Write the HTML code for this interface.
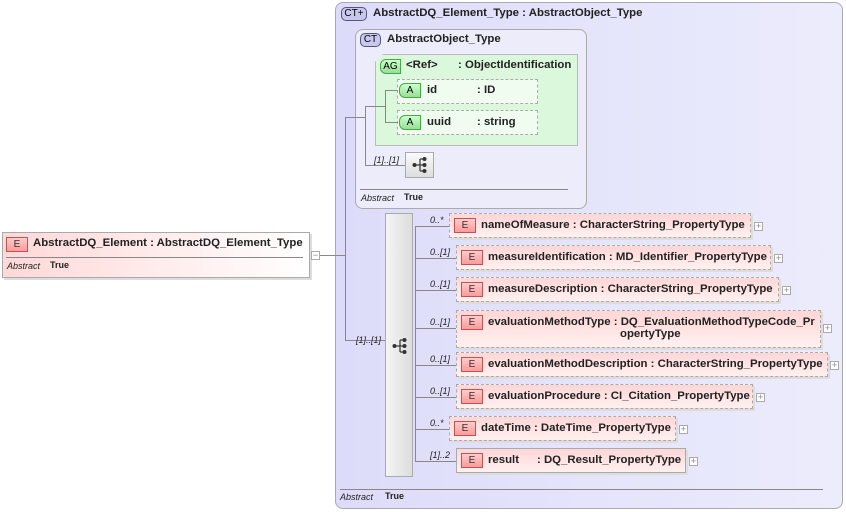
<!DOCTYPE html>
<html><head><style>
body{margin:0;width:846px;height:512px;background:#fff;position:relative;font-family:"Liberation Sans",sans-serif;overflow:hidden}
div,span{position:absolute;box-sizing:border-box}
.b{font-weight:bold;font-size:11.4px;color:#222;white-space:nowrap}
.i{font-style:italic;font-size:9px;color:#222;white-space:nowrap}
.el{border:1px dashed #aaa;background:linear-gradient(180deg,#ffd6d6,#fff0f0);box-shadow:2px 2px 0 #ddd}
.E{width:22px;height:15px;border:1px solid #b55;background:linear-gradient(#fcc,#f99);font-size:10px;text-align:center;line-height:13px;color:#333}
.pl{width:9px;height:9px;border:1px solid #aaa;background:#fff;font-size:9px;line-height:7px;text-align:center;color:#888}
.ln{background:#888}
.A{height:15px;border:1px solid #4a4;background:linear-gradient(#cfc,#9d9);font-size:10px;text-align:center;line-height:13px;border-radius:6px 0 0 6px}
</style></head><body>
<svg width="0" height="0" style="position:absolute"><defs><g id="seq" fill="#333" stroke="#333" stroke-width="1.2"><circle cx="2.5" cy="8" r="2" stroke="none"/><line x1="2.5" y1="8" x2="8" y2="8"/><line x1="8" y1="2" x2="8" y2="14"/><line x1="8" y1="2" x2="12" y2="2"/><line x1="8" y1="8" x2="12" y2="8"/><line x1="8" y1="14" x2="12" y2="14"/><circle cx="12.5" cy="2" r="2" stroke="none"/><circle cx="12.5" cy="8" r="2" stroke="none"/><circle cx="12.5" cy="14" r="2" stroke="none"/></g></defs></svg>
<!-- outer CT -->
<div style="left:335px;top:2px;width:508px;height:507px;border:1px solid #aaa;border-radius:8px;background:linear-gradient(90deg,#dcdcfa,#ececfc)"></div>
<div style="left:341px;top:7px;width:26px;height:14px;border:1px solid #557;border-radius:5px;background:#c8c8ee;font-size:10px;line-height:12px;text-align:center">CT+</div>
<div class="b" style="left:373px;top:7px">AbstractDQ_Element_Type : AbstractObject_Type</div>
<div class="ln" style="left:340px;top:489px;width:483px;height:1px"></div>
<div class="i" style="left:340px;top:492px">Abstract</div><div class="b" style="left:385px;top:491px;font-size:9px">True</div>
<!-- inner CT -->
<div style="left:355px;top:29px;width:232px;height:180px;border:1px solid #aaa;border-radius:8px;background:#ececfb"></div>
<div style="left:360px;top:33px;width:21px;height:14px;border:1px solid #557;border-radius:5px;background:#c8c8ee;font-size:10px;line-height:12px;text-align:center">CT</div>
<div class="b" style="left:387px;top:33px">AbstractObject_Type</div>
<div class="ln" style="left:360px;top:189px;width:208px;height:1px"></div>
<div class="i" style="left:361px;top:193px">Abstract</div><div class="b" style="left:404px;top:192px;font-size:9px">True</div>
<!-- AG -->
<div style="left:375px;top:54px;width:203px;height:92px;border:1px solid #bbb;background:#dcf8dc;box-shadow:3px 3px 0 #ccc;clip-path:polygon(8px 0,100% 0,100% 100%,0 100%,0 8px)"></div>
<div class="A" style="left:380px;top:59px;width:21px">AG</div>
<div class="b" style="left:406px;top:59px">&lt;Ref&gt;</div><div class="b" style="left:458px;top:59px">: ObjectIdentification</div>
<div style="left:397px;top:79px;width:141px;height:25px;border:1px dashed #aaa;background:#effcef"></div>
<div class="A" style="left:399px;top:83px;width:22px">A</div>
<div class="b" style="left:427px;top:84px">id</div><div class="b" style="left:477px;top:84px">: ID</div>
<div style="left:397px;top:110px;width:141px;height:25px;border:1px dashed #aaa;background:#effcef"></div>
<div class="A" style="left:399px;top:115px;width:22px">A</div>
<div class="b" style="left:427px;top:116px">uuid</div><div class="b" style="left:477px;top:116px">: string</div>
<div class="ln" style="left:385px;top:90px;width:1px;height:33px"></div>
<div class="ln" style="left:385px;top:90px;width:13px;height:1px"></div>
<div class="ln" style="left:385px;top:122px;width:13px;height:1px"></div>
<div class="ln" style="left:365px;top:106px;width:20px;height:1px"></div>
<div class="ln" style="left:365px;top:106px;width:1px;height:60px"></div>
<div class="ln" style="left:365px;top:165px;width:40px;height:1px"></div>
<div class="i" style="left:374px;top:155px">[1]..[1]</div>
<div style="left:405px;top:152px;width:29px;height:26px;border:1px solid #aaa;background:linear-gradient(#fafafa,#ddd)"></div>
<svg style="position:absolute;left:412px;top:157px" width="16" height="16"><use href="#seq"/></svg>
<!-- left element -->
<div style="left:2px;top:232px;width:308px;height:46px;border:1px solid #aaa;background:linear-gradient(90deg,#ffd8d8,#fff);box-shadow:2px 2px 0 #ddd"></div>
<div class="E" style="left:6px;top:237px">E</div>
<div class="b" style="left:33px;top:237px">AbstractDQ_Element : AbstractDQ_Element_Type</div>
<div class="ln" style="left:6px;top:257px;width:297px;height:1px"></div>
<div class="i" style="left:7px;top:261px">Abstract</div><div class="b" style="left:50px;top:260px;font-size:9px">True</div>
<div class="pl" style="left:311px;top:251px">−</div>
<div class="ln" style="left:320px;top:255px;width:25px;height:1px"></div>
<div class="ln" style="left:345px;top:117px;width:1px;height:224px"></div>
<div class="ln" style="left:345px;top:117px;width:20px;height:1px"></div>
<div class="ln" style="left:345px;top:340px;width:40px;height:1px"></div>
<div class="i" style="left:356px;top:335px">[1]..[1]</div>
<!-- sequence -->
<div style="left:385px;top:213px;width:28px;height:264px;border:1px solid #aaa;background:linear-gradient(90deg,#f4f4f4,#ddd)"></div>
<svg style="position:absolute;left:392px;top:338px" width="16" height="16"><use href="#seq"/></svg>
<div class="ln" style="left:415px;top:226px;width:1px;height:235px"></div>

<div class="ln" style="left:415px;top:226px;width:34px;height:1px"></div><div class="i" style="left:430px;top:215px">0..*</div>
<div class="el" style="left:449px;top:213px;width:302px;height:25px"></div><div class="E" style="left:454px;top:218px">E</div><div class="b" style="left:481px;top:219px">nameOfMeasure : CharacterString_PropertyType</div><div class="pl" style="left:754px;top:222px">+</div>

<div class="ln" style="left:415px;top:258px;width:41px;height:1px"></div><div class="i" style="left:430px;top:247px">0..[1]</div>
<div class="el" style="left:456px;top:245px;width:315px;height:25px"></div><div class="E" style="left:461px;top:250px">E</div><div class="b" style="left:488px;top:251px">measureIdentification : MD_Identifier_PropertyType</div><div class="pl" style="left:774px;top:254px">+</div>

<div class="ln" style="left:415px;top:290px;width:41px;height:1px"></div><div class="i" style="left:430px;top:279px">0..[1]</div>
<div class="el" style="left:456px;top:277px;width:323px;height:25px"></div><div class="E" style="left:461px;top:282px">E</div><div class="b" style="left:488px;top:283px">measureDescription : CharacterString_PropertyType</div><div class="pl" style="left:782px;top:286px">+</div>

<div class="ln" style="left:415px;top:328px;width:41px;height:1px"></div><div class="i" style="left:430px;top:317px">0..[1]</div>
<div class="el" style="left:456px;top:310px;width:365px;height:38px"></div><div class="E" style="left:461px;top:315px">E</div><div class="b" style="left:488px;top:316px">evaluationMethodType : DQ_EvaluationMethodTypeCode_Pr</div><div class="b" style="left:620px;top:328px">opertyType</div><div class="pl" style="left:823px;top:324px">+</div>

<div class="ln" style="left:415px;top:365px;width:41px;height:1px"></div><div class="i" style="left:430px;top:354px">0..[1]</div>
<div class="el" style="left:456px;top:352px;width:372px;height:25px"></div><div class="E" style="left:461px;top:357px">E</div><div class="b" style="left:488px;top:358px">evaluationMethodDescription : CharacterString_PropertyType</div><div class="pl" style="left:830px;top:361px">+</div>

<div class="ln" style="left:415px;top:397px;width:41px;height:1px"></div><div class="i" style="left:430px;top:386px">0..[1]</div>
<div class="el" style="left:456px;top:384px;width:297px;height:25px"></div><div class="E" style="left:461px;top:389px">E</div><div class="b" style="left:488px;top:390px">evaluationProcedure : CI_Citation_PropertyType</div><div class="pl" style="left:756px;top:393px">+</div>

<div class="ln" style="left:415px;top:429px;width:34px;height:1px"></div><div class="i" style="left:430px;top:418px">0..*</div>
<div class="el" style="left:449px;top:416px;width:227px;height:25px"></div><div class="E" style="left:454px;top:421px">E</div><div class="b" style="left:481px;top:422px">dateTime : DateTime_PropertyType</div><div class="pl" style="left:679px;top:425px">+</div>

<div class="ln" style="left:415px;top:461px;width:41px;height:1px"></div><div class="i" style="left:430px;top:450px">[1]..2</div>
<div style="left:456px;top:448px;width:230px;height:25px;border:1px solid #aaa;background:linear-gradient(180deg,#ffd6d6,#fff0f0);box-shadow:2px 2px 0 #ddd"></div><div class="E" style="left:461px;top:453px">E</div><div class="b" style="left:488px;top:454px">result</div><div class="b" style="left:537px;top:454px">: DQ_Result_PropertyType</div><div class="pl" style="left:689px;top:457px">+</div>
</body></html>
